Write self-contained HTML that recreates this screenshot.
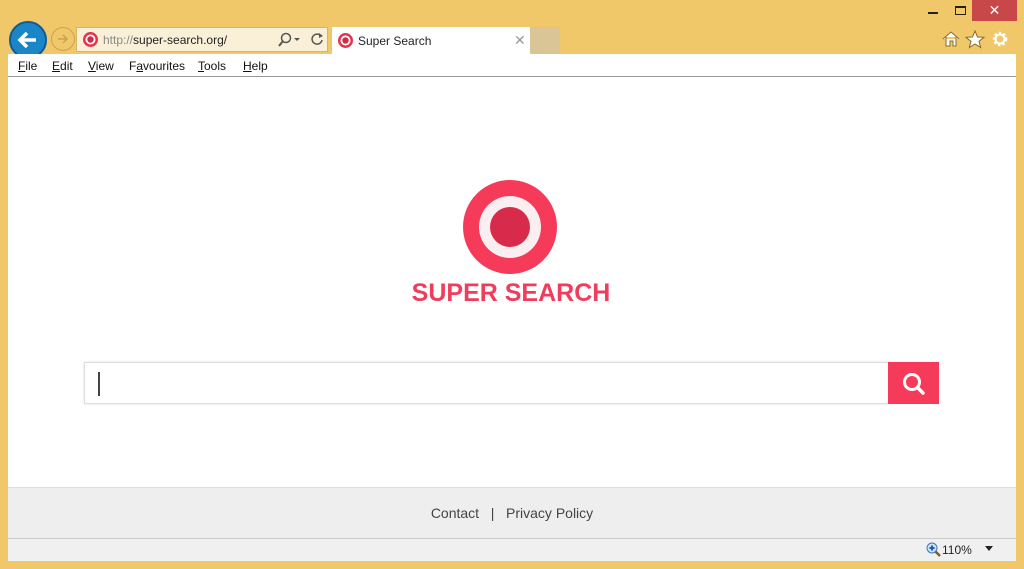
<!DOCTYPE html>
<html><head><meta charset="utf-8"><style>
*{margin:0;padding:0;box-sizing:border-box}
body{width:1024px;height:569px;background:#f0c869;font-family:"Liberation Sans",sans-serif;position:relative;overflow:hidden}
.abs{position:absolute}
.menu span{position:absolute;top:59px;font-size:12px;color:#111}
.menu u{text-decoration:underline}
</style></head><body>
<div class="abs" style="left:928px;top:12px;width:10px;height:2px;background:#222"></div>
<div class="abs" style="left:955px;top:6px;width:11px;height:9px;border:1px solid #222;border-top-width:2px"></div>
<div class="abs" style="left:972px;top:0;width:45px;height:21px;background:#c8484a;color:#fff;font-size:14px;text-align:center;line-height:21px">✕</div>
<svg class="abs" style="left:941px;top:29px" width="72" height="20" viewBox="0 0 72 20">
<path d="M2 10 L10 3 L18 10 M5 8 V17 H9 V12 H12 V17 H15 V8" fill="#fff" stroke="#8a6a2a" stroke-width="1"/>
<path d="M34 2 L36.5 8 L43 8.3 L38 12.3 L39.7 18.5 L34 15 L28.3 18.5 L30 12.3 L25 8.3 L31.5 8Z" fill="#fff" stroke="#8a6a2a" stroke-width="1"/>
<circle cx="59" cy="10" r="5.5" fill="none" stroke="#fff" stroke-width="3.5" stroke-dasharray="2.2 1.9"/>
<circle cx="59" cy="10" r="4.5" fill="none" stroke="#fff" stroke-width="2"/>
</svg>
<div class="abs" style="left:9px;top:21px;width:38px;height:38px;border-radius:50%;background:#1a86c8;border:2px solid #0d5c96"></div>
<svg class="abs" style="left:14px;top:26px" width="28" height="28" viewBox="0 0 28 28"><path d="M22 14H7M13 7L6 14L13 21" stroke="#fff" stroke-width="3.5" fill="none"/></svg>
<div class="abs" style="left:51px;top:27px;width:24px;height:24px;border-radius:50%;border:1px solid #c9a450"></div>
<svg class="abs" style="left:55px;top:31px" width="16" height="16" viewBox="0 0 16 16"><path d="M3 8H12M8 4L12 8L8 12" stroke="#c9a450" stroke-width="1.5" fill="none"/></svg>
<div class="abs" style="left:76px;top:27px;width:252px;height:25px;background:#faf0d7;border:1px solid #d8b560"></div>
<svg class="abs" style="left:82px;top:31px" width="17" height="17"><circle cx="8.5" cy="8.5" r="7.5" fill="#e8324e"/><circle cx="8.5" cy="8.5" r="5" fill="#fff"/><circle cx="8.5" cy="8.5" r="3.2" fill="#d42a47"/></svg>
<div class="abs" style="left:103px;top:33px;font-size:12px;color:#888">http://<span style="color:#222">super-search.org/</span></div>
<svg class="abs" style="left:277px;top:31px" width="50" height="17"><circle cx="9" cy="7" r="4.5" fill="none" stroke="#555" stroke-width="1.5"/><path d="M6 10L2 15" stroke="#555" stroke-width="2"/><path d="M17 7H23L20 10Z" fill="#555"/><path d="M44 5A5 5 0 1 0 45 9" fill="none" stroke="#555" stroke-width="1.5"/><path d="M42 2L46 5L42 7Z" fill="#555"/></svg>
<div class="abs" style="left:332px;top:27px;width:198px;height:27px;background:#fff"></div>
<svg class="abs" style="left:337px;top:32px" width="17" height="17"><circle cx="8.5" cy="8.5" r="7.5" fill="#e8324e"/><circle cx="8.5" cy="8.5" r="5" fill="#fff"/><circle cx="8.5" cy="8.5" r="3.2" fill="#d42a47"/></svg>
<div class="abs" style="left:358px;top:34px;font-size:12px;color:#222">Super Search</div>
<div class="abs" style="left:514px;top:32px;font-size:14px;color:#999">✕</div>
<div class="abs" style="left:530px;top:27px;width:30px;height:27px;background:#d9c596"></div>
<div class="abs" style="left:8px;top:54px;width:1008px;height:23px;background:#fff;border-bottom:1px solid #999"></div>
<div class="menu">
<span style="left:18px"><u>F</u>ile</span><span style="left:52px"><u>E</u>dit</span><span style="left:88px"><u>V</u>iew</span><span style="left:129px">F<u>a</u>vourites</span><span style="left:198px"><u>T</u>ools</span><span style="left:243px"><u>H</u>elp</span>
</div>
<div class="abs" style="left:8px;top:77px;width:1008px;height:410px;background:#fff"></div>
<svg class="abs" style="left:462px;top:179px" width="96" height="96"><circle cx="48" cy="48" r="47" fill="#f53a5a"/><circle cx="48" cy="48" r="31" fill="#fbeef0"/><circle cx="48" cy="48" r="20" fill="#d82a4a"/></svg>
<div class="abs" style="left:311px;top:279px;width:400px;text-align:center;font-size:25px;font-weight:bold;color:#f03d5c">SUPER SEARCH</div>
<div class="abs" style="left:84px;top:362px;width:805px;height:42px;border:1px solid #ddd;box-shadow:0 0 2px #ddd;background:#fff"></div>
<div class="abs" style="left:98px;top:372px;width:2px;height:24px;background:#444"></div>
<div class="abs" style="left:888px;top:362px;width:51px;height:42px;background:#f53a5a"></div>
<svg class="abs" style="left:900px;top:370px" width="28" height="28"><circle cx="12" cy="12" r="7.5" fill="none" stroke="#fff" stroke-width="3"/><path d="M17.5 17.5L23 23" stroke="#fff" stroke-width="3.5" stroke-linecap="round"/></svg>
<div class="abs" style="left:8px;top:487px;width:1008px;height:51px;background:#eeeeee;border-top:1px solid #ddd"></div>
<div class="abs" style="left:8px;top:505px;width:1008px;text-align:center;font-size:14px;color:#444">Contact &nbsp; | &nbsp; Privacy Policy</div>
<div class="abs" style="left:8px;top:538px;width:1008px;height:23px;background:#f0f0f0;border-top:1px solid #ccc"></div>
<svg class="abs" style="left:926px;top:542px" width="16" height="16"><circle cx="6" cy="6" r="5" fill="#cfe2f5" stroke="#3a78c0"/><path d="M3.5 6H8.5M6 3.5V8.5" stroke="#1a5fb0" stroke-width="2"/><path d="M9.5 9.5L14 14" stroke="#8a5a20" stroke-width="2.5"/></svg>
<div class="abs" style="left:942px;top:543px;font-size:12px;color:#222">110%</div>
<svg class="abs" style="left:985px;top:546px" width="10" height="6"><path d="M0 0H8L4 5Z" fill="#222"/></svg>
</body></html>
